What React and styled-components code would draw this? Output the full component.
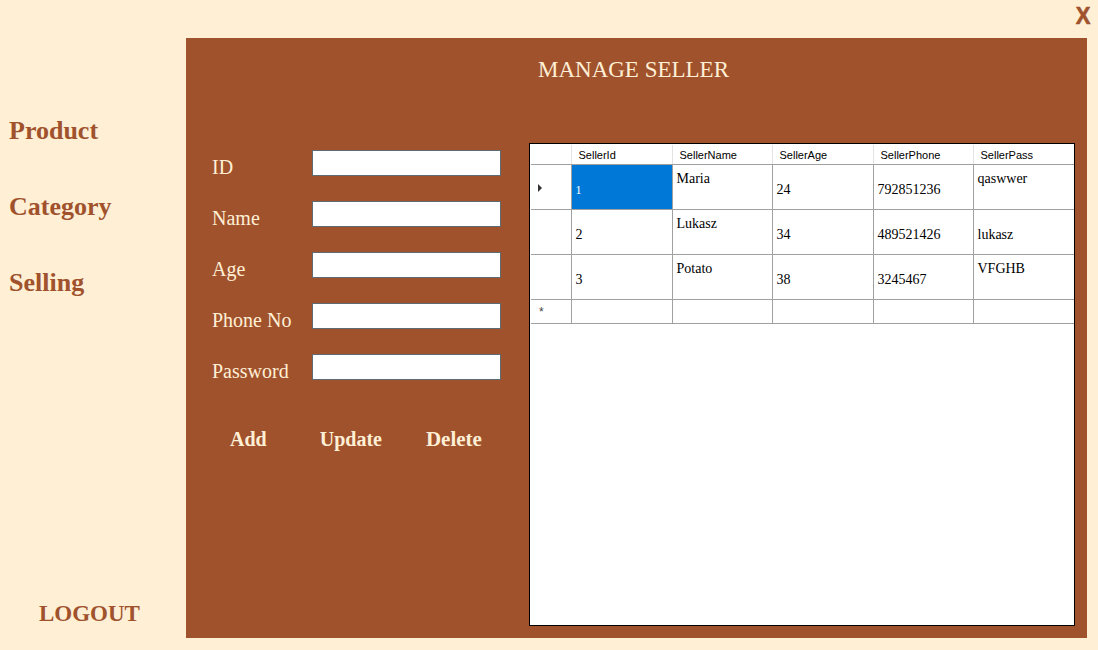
import React from "react";
import styled, { createGlobalStyle } from "styled-components";

const sellers = [
  { id: "1", name: "Maria", age: "24", phone: "792851236", pass: "qaswwer", passLow: false },
  { id: "2", name: "Lukasz", age: "34", phone: "489521426", pass: "lukasz", passLow: true },
  { id: "3", name: "Potato", age: "38", phone: "3245467", pass: "VFGHB", passLow: false },
];

const fields = ["ID", "Name", "Age", "Phone No", "Password"];

function App() {
  return (
    <Page>
      <GlobalStyle />
      <TopBar>
        <CloseBtn>X</CloseBtn>
      </TopBar>
      <Body>
        <Sidebar>
          <NavList>
            <NavItem>Product</NavItem>
            <NavItem>Category</NavItem>
            <NavItem>Selling</NavItem>
          </NavList>
          <Logout>LOGOUT</Logout>
        </Sidebar>
        <Panel>
          <Title>MANAGE SELLER</Title>
          <Content>
            <Form>
              {fields.map((f) => (
                <FieldRow key={f}>
                  <Label>{f}</Label>
                  <Input />
                </FieldRow>
              ))}
              <Buttons>
                <ActionBtn>Add</ActionBtn>
                <ActionBtn>Update</ActionBtn>
                <ActionBtn>Delete</ActionBtn>
              </Buttons>
            </Form>
            <GridBox>
              <Table>
                <colgroup>
                  <col style={{ width: 40 }} />
                  <col style={{ width: 101 }} />
                  <col style={{ width: 100 }} />
                  <col style={{ width: 101 }} />
                  <col style={{ width: 100 }} />
                  <col style={{ width: 101 }} />
                </colgroup>
                <thead>
                  <tr>
                    <HeadCell />
                    <HeadCell>SellerId</HeadCell>
                    <HeadCell>SellerName</HeadCell>
                    <HeadCell>SellerAge</HeadCell>
                    <HeadCell>SellerPhone</HeadCell>
                    <HeadCell>SellerPass</HeadCell>
                  </tr>
                </thead>
                <tbody>
                  {sellers.map((s, i) => (
                    <tr key={s.id}>
                      <RowHead>{i === 0 && <Arrow />}</RowHead>
                      <Cell selected={i === 0}>
                        <CellText low small={i === 0}>{s.id}</CellText>
                      </Cell>
                      <Cell>
                        <CellText>{s.name}</CellText>
                      </Cell>
                      <Cell>
                        <CellText low>{s.age}</CellText>
                      </Cell>
                      <Cell>
                        <CellText low>{s.phone}</CellText>
                      </Cell>
                      <Cell>
                        <CellText low={s.passLow}>{s.pass}</CellText>
                      </Cell>
                    </tr>
                  ))}
                  <NewRow>
                    <RowHead>
                      <Star>*</Star>
                    </RowHead>
                    <Cell />
                    <Cell />
                    <Cell />
                    <Cell />
                    <Cell />
                  </NewRow>
                </tbody>
              </Table>
            </GridBox>
          </Content>
        </Panel>
      </Body>
    </Page>
  );
}

export default App;

const GlobalStyle = createGlobalStyle`
  html, body {
    margin: 0;
    padding: 0;
    background-color: #ffefd5;
  }
`;

const Page = styled.div`
  width: 1098px;
  height: 650px;
  background-color: #ffefd5;
  display: flex;
  flex-direction: column;
  font-family: "Liberation Serif", serif;
  overflow: hidden;
`;

const TopBar = styled.div`
  height: 38px;
  display: flex;
  justify-content: flex-end;
  align-items: flex-start;
  padding-right: 7px;
`;

const CloseBtn = styled.div`
  font-family: "Liberation Sans", sans-serif;
  font-weight: 700;
  font-size: 24px;
  line-height: 1;
  margin-top: 4px;
  color: #a0522d;
  cursor: pointer;
  transform: scaleX(0.92);
  -webkit-text-stroke: 0.6px #a0522d;
`;

const Body = styled.div`
  display: flex;
  height: 600px;
`;

const Sidebar = styled.div`
  width: 186px;
  display: flex;
  flex-direction: column;
  justify-content: space-between;
  padding: 0 0 10px 9px;
  box-sizing: border-box;
`;

const NavList = styled.div`
  display: flex;
  flex-direction: column;
  gap: 48px;
  margin-top: 79px;
`;

const NavItem = styled.div`
  color: #a0522d;
  font-size: 26px;
  font-weight: 700;
  line-height: 28px;
  cursor: pointer;
`;

const Logout = styled.div`
  color: #a0522d;
  font-size: 23px;
  font-weight: 700;
  margin-left: 30px;
  line-height: 28px;
  cursor: pointer;
`;

const Panel = styled.div`
  width: 901px;
  height: 600px;
  background-color: #a0522d;
  display: flex;
  flex-direction: column;
`;

const Title = styled.div`
  color: #ffefd5;
  font-size: 23px;
  text-align: center;
  margin-top: 19px;
  padding-right: 6px;
  line-height: 26px;
  height: 48px;
`;

const Content = styled.div`
  display: flex;
  padding-left: 26px;
  margin-top: 38px;
`;

const Form = styled.div`
  width: 317px;
  display: flex;
  flex-direction: column;
  gap: 25px;
  padding-top: 7px;
`;

const FieldRow = styled.div`
  display: flex;
  align-items: center;
  height: 26px;
`;

const Label = styled.div`
  width: 100px;
  color: #ffefd5;
  font-size: 20px;
  line-height: 26px;
  padding-top: 7px;
`;

const Input = styled.input`
  width: 189px;
  height: 26px;
  box-sizing: border-box;
  border: 1px solid #5f6b73;
  background: #fff;
  outline: none;
`;

const Buttons = styled.div`
  display: flex;
  margin-top: 22px;
  padding-left: 18px;
  gap: 53px;
`;

const ActionBtn = styled.button`
  background: none;
  border: none;
  padding: 0;
  color: #ffefd5;
  font-family: "Liberation Serif", serif;
  font-weight: 700;
  font-size: 20px;
  cursor: pointer;
  &:nth-child(3) {
    margin-left: -9px;
    font-size: 21px;
  }
`;

const GridBox = styled.div`
  width: 546px;
  height: 483px;
  box-sizing: border-box;
  border: 1px solid #000;
  background: #fff;
  padding: 1px 1px 0 1px;
`;

const Table = styled.table`
  border-collapse: collapse;
  table-layout: fixed;
  width: 543px;
`;

const HeadCell = styled.th`
  height: 19px;
  padding: 0 0 0 7px;
  font-family: "Liberation Sans", sans-serif;
  font-size: 11px;
  font-weight: 400;
  text-align: left;
  color: #000;
  border-left: 1px solid #e3e3e3;
  border-bottom: 1px solid #a0a0a0;
  &:first-child {
    border-left: none;
  }
`;

const RowHead = styled.td`
  height: 44px;
  border-right: 1px solid #a0a0a0;
  border-bottom: 1px solid #a0a0a0;
  padding: 0;
  position: relative;
`;

const Arrow = styled.span`
  position: absolute;
  left: 7px;
  top: 19px;
  width: 0;
  height: 0;
  border-top: 4px solid transparent;
  border-bottom: 4px solid transparent;
  border-left: 4px solid #333;
`;

const Star = styled.span`
  position: absolute;
  left: 8px;
  top: 5px;
  font-family: "Liberation Sans", sans-serif;
  font-size: 12px;
  color: #444;
`;

const Cell = styled.td`
  height: 44px;
  border-right: 1px solid #a0a0a0;
  border-bottom: 1px solid #a0a0a0;
  padding: 0 4px;
  vertical-align: top;
  background: ${({ selected }) => (selected ? "#0078d7" : "#fff")};
  color: ${({ selected }) => (selected ? "#fff" : "#000")};
  &:last-child {
    border-right: none;
  }
`;

const CellText = styled.div`
  font-family: "Liberation Serif", serif;
  font-size: ${({ small }) => (small ? "12px" : "14px")};
  line-height: 16px;
  margin-top: ${({ low }) => (low ? "17px" : "6px")};
`;

const NewRow = styled.tr`
  td {
    height: 23px;
  }
`;
